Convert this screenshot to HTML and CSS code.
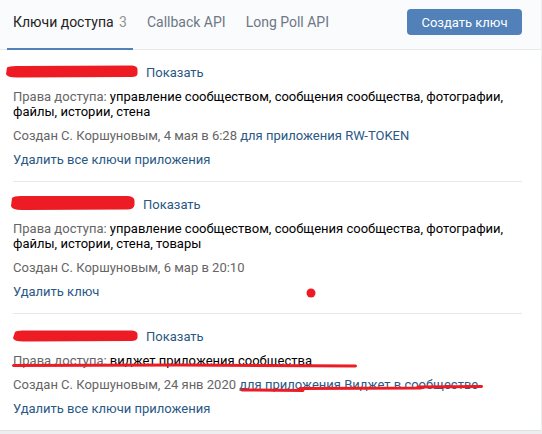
FILE: index.html
```html
<!DOCTYPE html>
<html lang="ru">
<head>
<meta charset="utf-8">
<link rel="stylesheet" href="styles.css">
</head>
<body>
<div class="page">
  <div class="card">
    <div class="header">
      <div class="tabs">
        <div class="tab active">Ключи доступа <span class="count">3</span></div>
        <div class="tab">Callback API</div>
        <div class="tab">Long Poll API</div>
      </div>
      <button class="btn">Создать ключ</button>
    </div>

    <div class="block">
      <div class="row keyrow"><span class="key k1"></span><a class="link">Показать</a></div>
      <div class="row perms"><span class="label">Права доступа:</span> управление сообществом, сообщения сообщества, фотографии, файлы, истории, стена</div>
      <div class="row meta">Создан С. Коршуновым, 4 мая в 6:28 <a class="link">для приложения RW-TOKEN</a></div>
      <div class="row"><a class="link">Удалить все ключи приложения</a></div>
    </div>

    <div class="block">
      <div class="row keyrow"><span class="key k2"></span><a class="link">Показать</a></div>
      <div class="row perms"><span class="label">Права доступа:</span> управление сообществом, сообщения сообщества, фотографии, файлы, истории, стена, товары</div>
      <div class="row meta">Создан С. Коршуновым, 6 мар в 20:10</div>
      <div class="row"><a class="link">Удалить ключ</a></div>
    </div>

    <div class="block last">
      <div class="row keyrow"><span class="key k3"></span><a class="link">Показать</a></div>
      <div class="row perms"><span class="label">Права доступа:</span> виджет приложения сообщества</div>
      <div class="row meta">Создан С. Коршуновым, 24 янв 2020 <a class="link">для приложения Виджет в сообществе</a></div>
      <div class="row"><a class="link">Удалить все ключи приложения</a></div>
    </div>
  </div>

  <svg class="marks" width="542" height="434" viewBox="0 0 542 434">
    <path d="M7 67.5 Q9 65.5 20 66 L132 65.5 Q138 66 137.5 70 L137.5 74 Q137 77.5 130 77 L20 77.5 Q7 78 6 74 Z" fill="#ed1c24"/>
    <path d="M12 198 Q14 195.5 24 196 L128 196 Q134.5 196.5 134.5 201 L134.5 205 Q133.5 210 126 209.5 L24 210 Q12 210.5 11 206 Z" fill="#ed1c24"/>
    <path d="M15 332 Q16 330 26 330.5 L132 330.5 Q138 331 137.5 335 L137.5 338 Q136.5 341.5 130 341 L26 341.5 Q14 342 13 338 Z" fill="#ed1c24"/>
    <circle cx="311" cy="293" r="4.5" fill="#ed1c24"/>
    <path d="M13.5 365.5 L180 365 L355.5 366" stroke="#ed1c24" stroke-width="3" fill="none" stroke-linecap="round"/>
    <path d="M242 390 L303 390.5 M300 388.5 L421 388 M418 387 L481.5 386.5" stroke="#ed1c24" stroke-width="3" fill="none" stroke-linecap="round"/>
  </svg>
</div>
</body>
</html>
```

FILE: styles.css
```css
* { box-sizing: border-box; }
html, body { margin: 0; padding: 0; }
body {
  background: #edeef0;
  font-family: Roboto, "Open Sans", "Liberation Sans", sans-serif;
  font-size: 13px;
  color: #000;
}
.page { position: relative; width: 542px; height: 434px; overflow: hidden; }
.card {
  background: #fff;
  width: 541px;
  box-shadow: 0 1px 0 #dce1e6;
}
.header {
  height: 50px;
  background: #fafbfc;
  border-bottom: 1px solid #e7e8ec;
  display: flex;
  align-items: flex-start;
  justify-content: space-between;
  padding: 0 19px 0 7px;
}
.tabs { display: flex; height: 49px; }
.tab {
  height: 49px;
  padding: 14px 6px 0;
  font-size: 14px;
  color: #6d7885;
  margin-right: 8px;
  line-height: 17px;
}
.tab.active {
  color: #222;
  border-bottom: 2px solid #5181b8;
  height: 50px;
}
.count { color: #939393; margin-left: 2px; }
.btn {
  margin-top: 9px;
  height: 26px;
  width: 115px;
  border: none;
  border-radius: 4px;
  background: #5181b8;
  color: #fff;
  font-family: inherit;
  font-size: 13px;
  padding: 0;
}
.block {
  margin: 0 19px 0 13px;
  padding: 15px 0 14px;
  border-bottom: 1px solid #e7e8ec;
  display: flex;
  flex-direction: column;
  gap: 9px;
  line-height: 15px;
}
.block.last { border-bottom: none; }
.row { line-height: 15px; }
.keyrow { display: flex; align-items: center; height: 15px; }
.key { display: inline-block; height: 11px; }
.k1 { width: 133px; }
.k2 { width: 130px; }
.k3 { width: 133px; }
.link { color: #2a5885; text-decoration: none; }
.label { color: #656565; }
.meta { color: #656565; }
.marks { position: absolute; left: 0; top: 0; pointer-events: none; }
```
